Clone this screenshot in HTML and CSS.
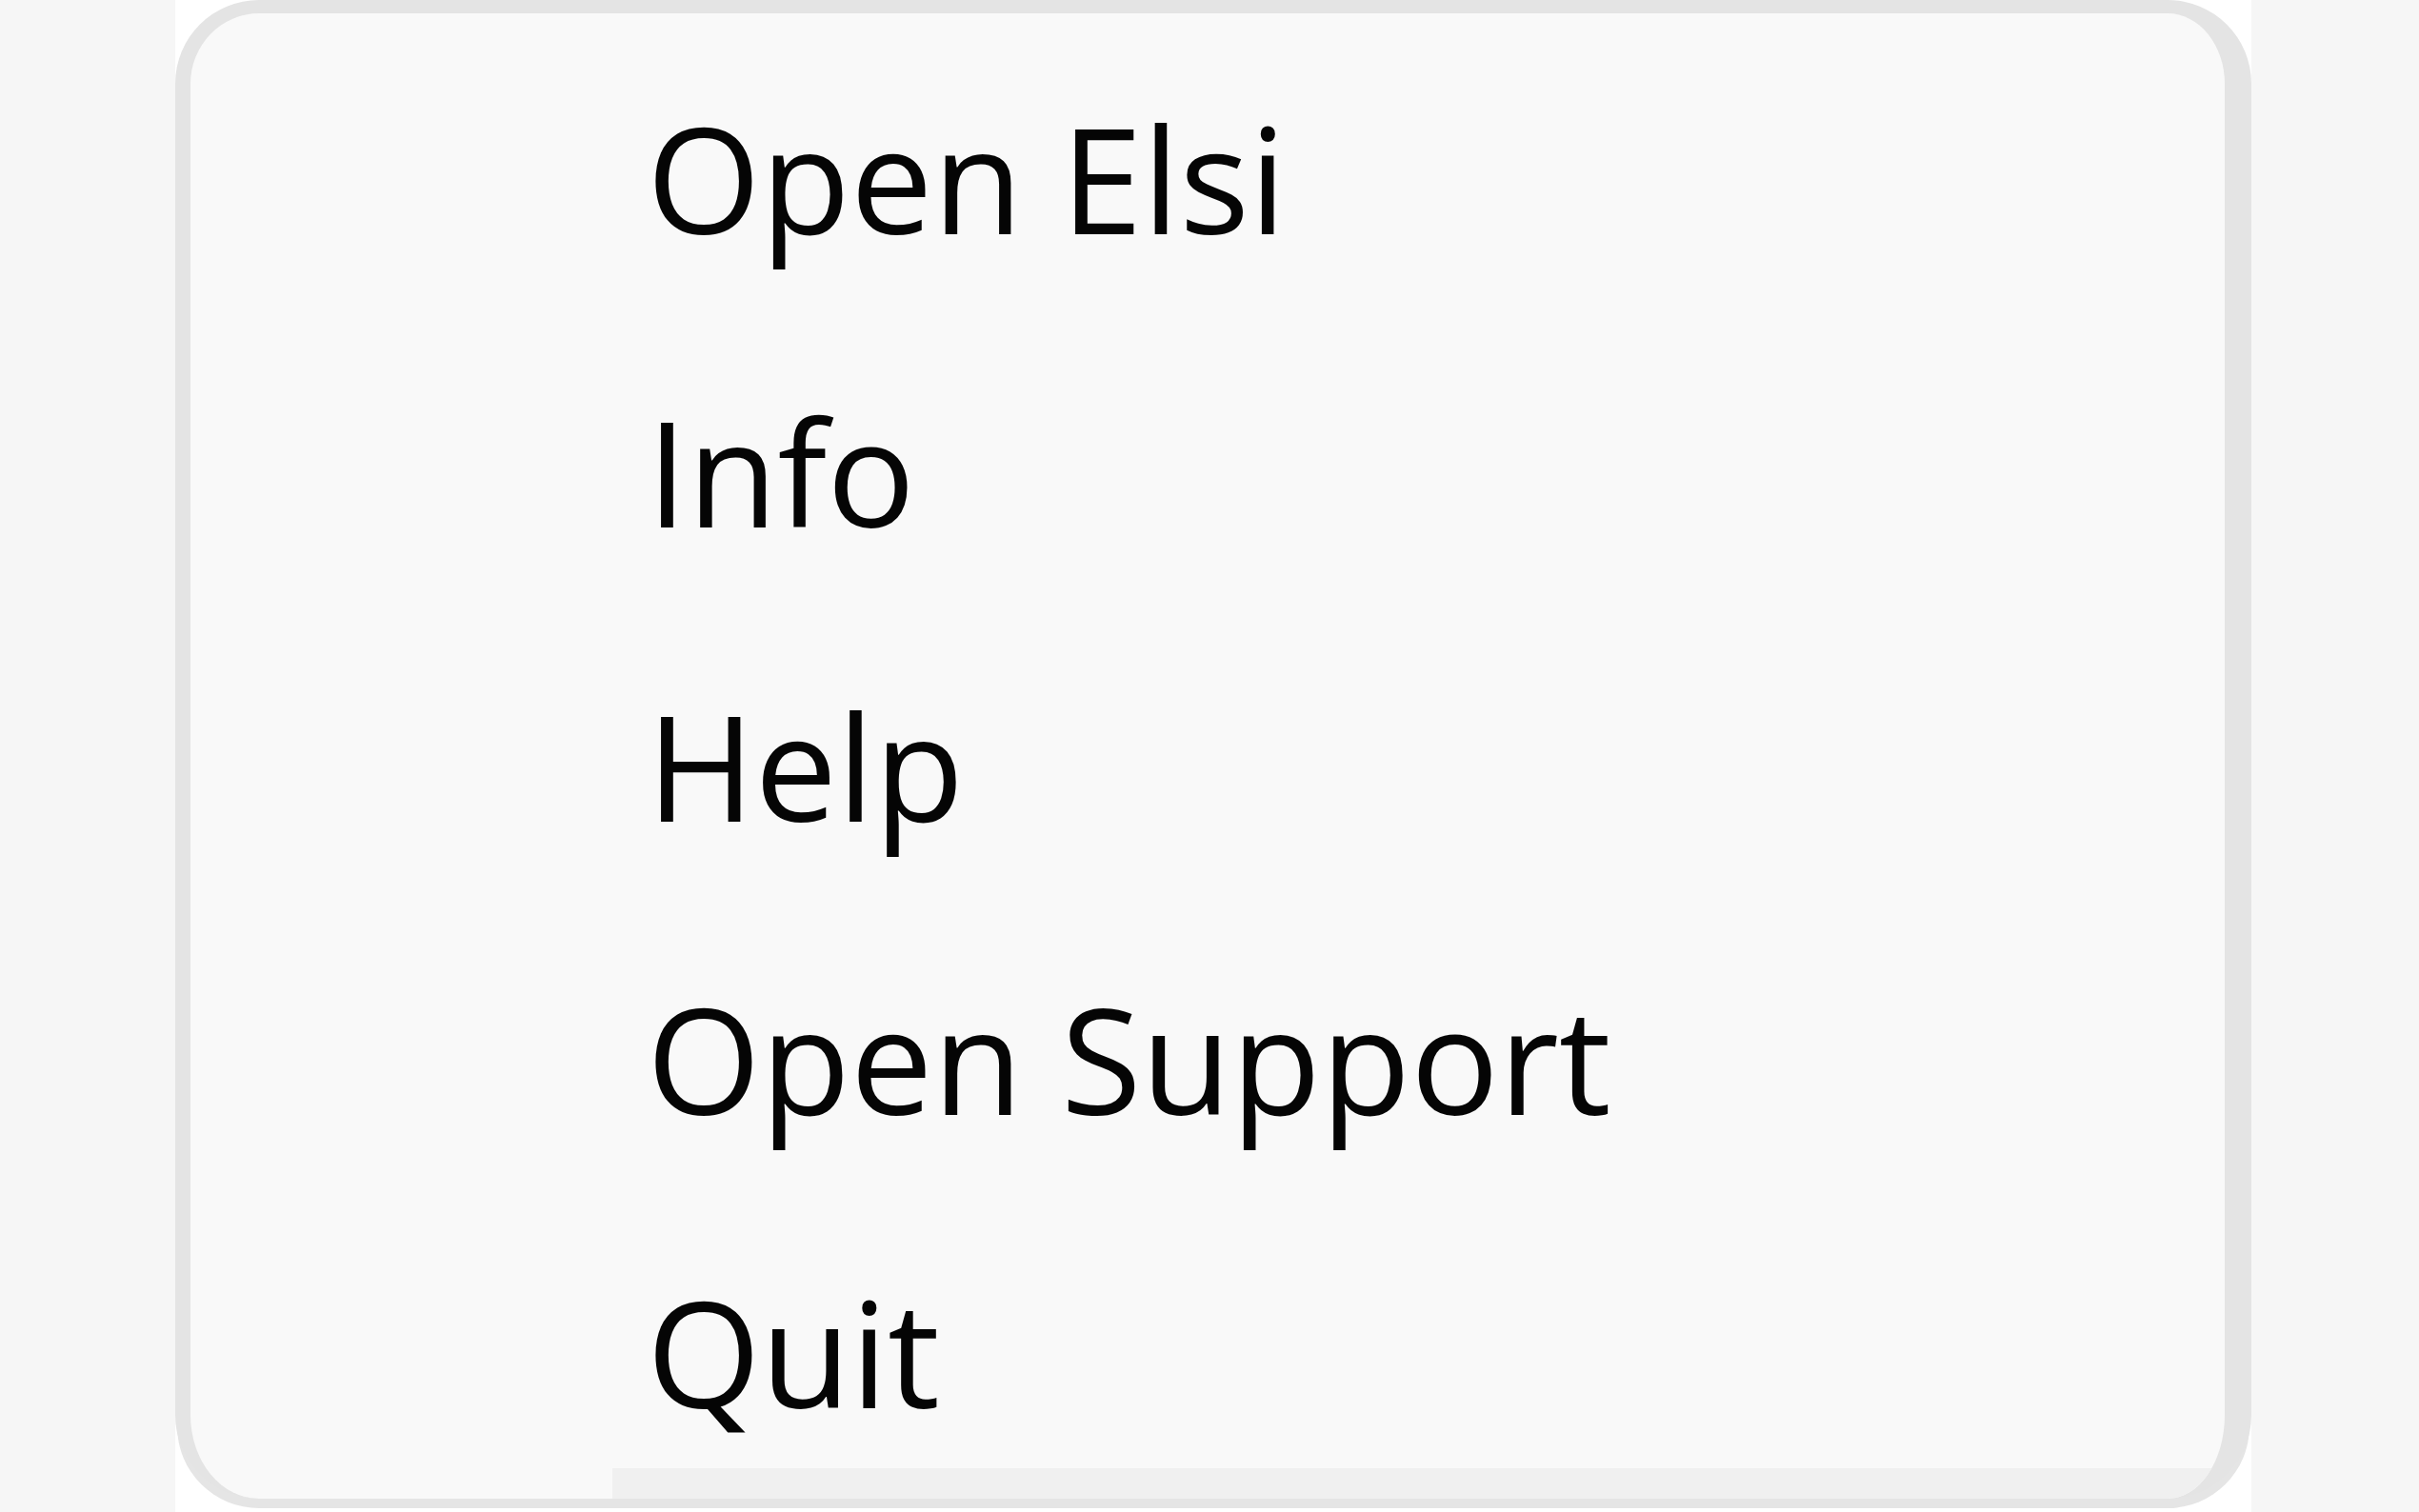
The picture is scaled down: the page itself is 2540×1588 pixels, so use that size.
FILE: index.html
```html
<!DOCTYPE html>
<html>
<head>
<meta charset="utf-8">
<link rel="stylesheet" href="styles.css">
</head>
<body>
<div class="page">
  <div class="menu">
    <div class="item">Open Elsi</div>
    <div class="item">Info</div>
    <div class="item">Help</div>
    <div class="item">Open Support</div>
    <div class="item">Quit</div>
  </div>
</div>
</body>
</html>
```
FILE: styles.css
```css
html, body {
  margin: 0;
  padding: 0;
  background: #f6f6f6;
}
body {
  width: 2540px;
  height: 1588px;
  overflow: hidden;
}
.page {
  margin-left: 184px;
  width: 2180px;
  height: 1588px;
  background: #ffffff;
}
.menu {
  position: relative;
  overflow: hidden;
  box-sizing: border-box;
  height: 1574px;
  background: #f9f9f9;
  border-style: solid;
  border-color: #e4e4e4;
  border-width: 14px 28px 0 16px;
  border-radius: 88px;
  box-shadow: 0 12px 0 -2px #e5e5e5;
  padding-top: 18px;
  padding-left: 479px;
  font-family: "Open Sans", "Noto Sans", sans-serif;
  font-size: 154px;
  color: #050505;
}
.menu::after {
  content: "";
  position: absolute;
  left: 443px;
  right: 0;
  bottom: 0;
  height: 32px;
  background: #f0f0f0;
}
.item {
  height: 308.3px;
  line-height: 308.3px;
  white-space: nowrap;
}
```
